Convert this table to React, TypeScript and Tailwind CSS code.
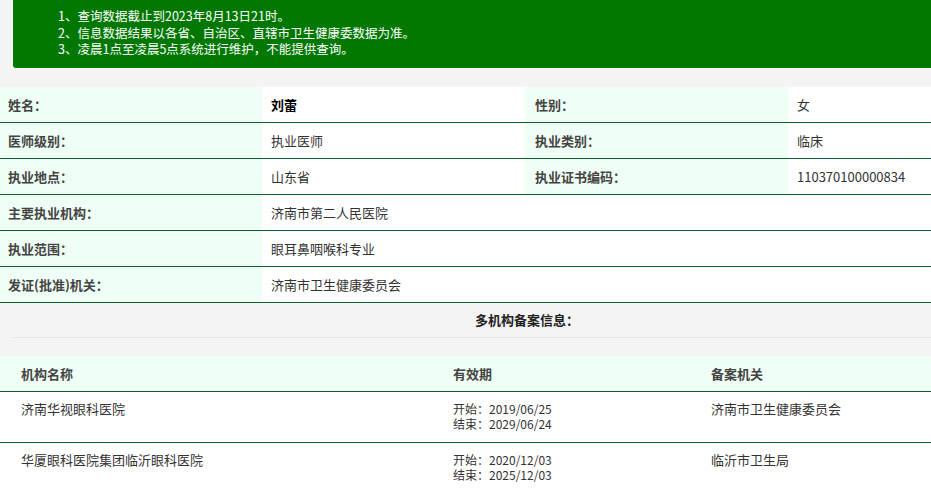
import React from "react";

const font = { fontFamily: '"Noto Sans CJK SC", "Noto Sans", sans-serif' };

export default function App() {
  const infoRows: { l1: string; v1: string; l2?: string; v2?: string; bold?: boolean }[] = [
    { l1: "姓名：", v1: "刘蕾", l2: "性别：", v2: "女", bold: true },
    { l1: "医师级别：", v1: "执业医师", l2: "执业类别：", v2: "临床" },
    { l1: "执业地点：", v1: "山东省", l2: "执业证书编码：", v2: "110370100000834" },
    { l1: "主要执业机构：", v1: "济南市第二人民医院" },
    { l1: "执业范围：", v1: "眼耳鼻咽喉科专业" },
    { l1: "发证(批准)机关：", v1: "济南市卫生健康委员会" },
  ];
  const orgs = [
    { name: "济南华视眼科医院", start: "2019/06/25", end: "2029/06/24", org: "济南市卫生健康委员会" },
    { name: "华厦眼科医院集团临沂眼科医院", start: "2020/12/03", end: "2025/12/03", org: "临沂市卫生局" },
  ];
  return (
    <div className="w-[931px] h-[490px] overflow-hidden bg-[#f4f4f4] text-[13px] text-[#333]" style={font}>
      <div className="ml-[13px] h-[68px] bg-[#007800] rounded-bl-[3px] pl-[45px] pt-[8px] text-[12.5px] text-white leading-[16.5px]">
        <div>1、查询数据截止到2023年8月13日21时。</div>
        <div>2、信息数据结果以各省、自治区、直辖市卫生健康委数据为准。</div>
        <div>3、凌晨1点至凌晨5点系统进行维护，不能提供查询。</div>
      </div>
      <div className="h-[19px]" />
      <div className="bg-white">
        {infoRows.map((r, i) => (
          <div key={i} className="grid grid-cols-[262px_263px_263px_1fr] h-[36px] border-b border-[#0e5f2c]">
            <div className="bg-[#f0fff5] pl-[8px] flex items-center font-bold text-[#444]">{r.l1}</div>
            {r.l2 !== undefined ? (
              <>
                <div className={"pl-[9px] flex items-center " + (r.bold ? "font-bold text-black" : "")}>{r.v1}</div>
                <div className="bg-[#f0fff5] pl-[10px] flex items-center font-bold text-[#444]">{r.l2}</div>
                <div className="pl-[9px] flex items-center">{r.v2}</div>
              </>
            ) : (
              <div className="col-span-3 pl-[9px] flex items-center">{r.v1}</div>
            )}
          </div>
        ))}
      </div>
      <div className="ml-[12px] h-[35px] border-b border-[#e4e4e4] flex items-center pl-[463px] font-bold text-[#222]">
        多机构备案信息：
      </div>
      <div className="h-[18px]" />
      <div className="bg-white">
        <div className="grid grid-cols-[432px_258px_1fr] h-[36px] bg-[#f0fff5] border-b border-[#0e5f2c] items-center font-bold text-[#444]">
          <div className="pl-[21px]">机构名称</div>
          <div className="pl-[21px]">有效期</div>
          <div className="pl-[21px]">备案机关</div>
        </div>
        {orgs.map((o, i) => (
          <div key={i} className="grid grid-cols-[432px_258px_1fr] h-[51px] border-b border-[#0e5f2c] pt-[9px] leading-[15px]">
            <div className="pl-[21px]">{o.name}</div>
            <div className="pl-[21px] text-[12px]">
              <div>开始：{o.start}</div>
              <div>结束：{o.end}</div>
            </div>
            <div className="pl-[21px]">{o.org}</div>
          </div>
        ))}
      </div>
    </div>
  );
}
